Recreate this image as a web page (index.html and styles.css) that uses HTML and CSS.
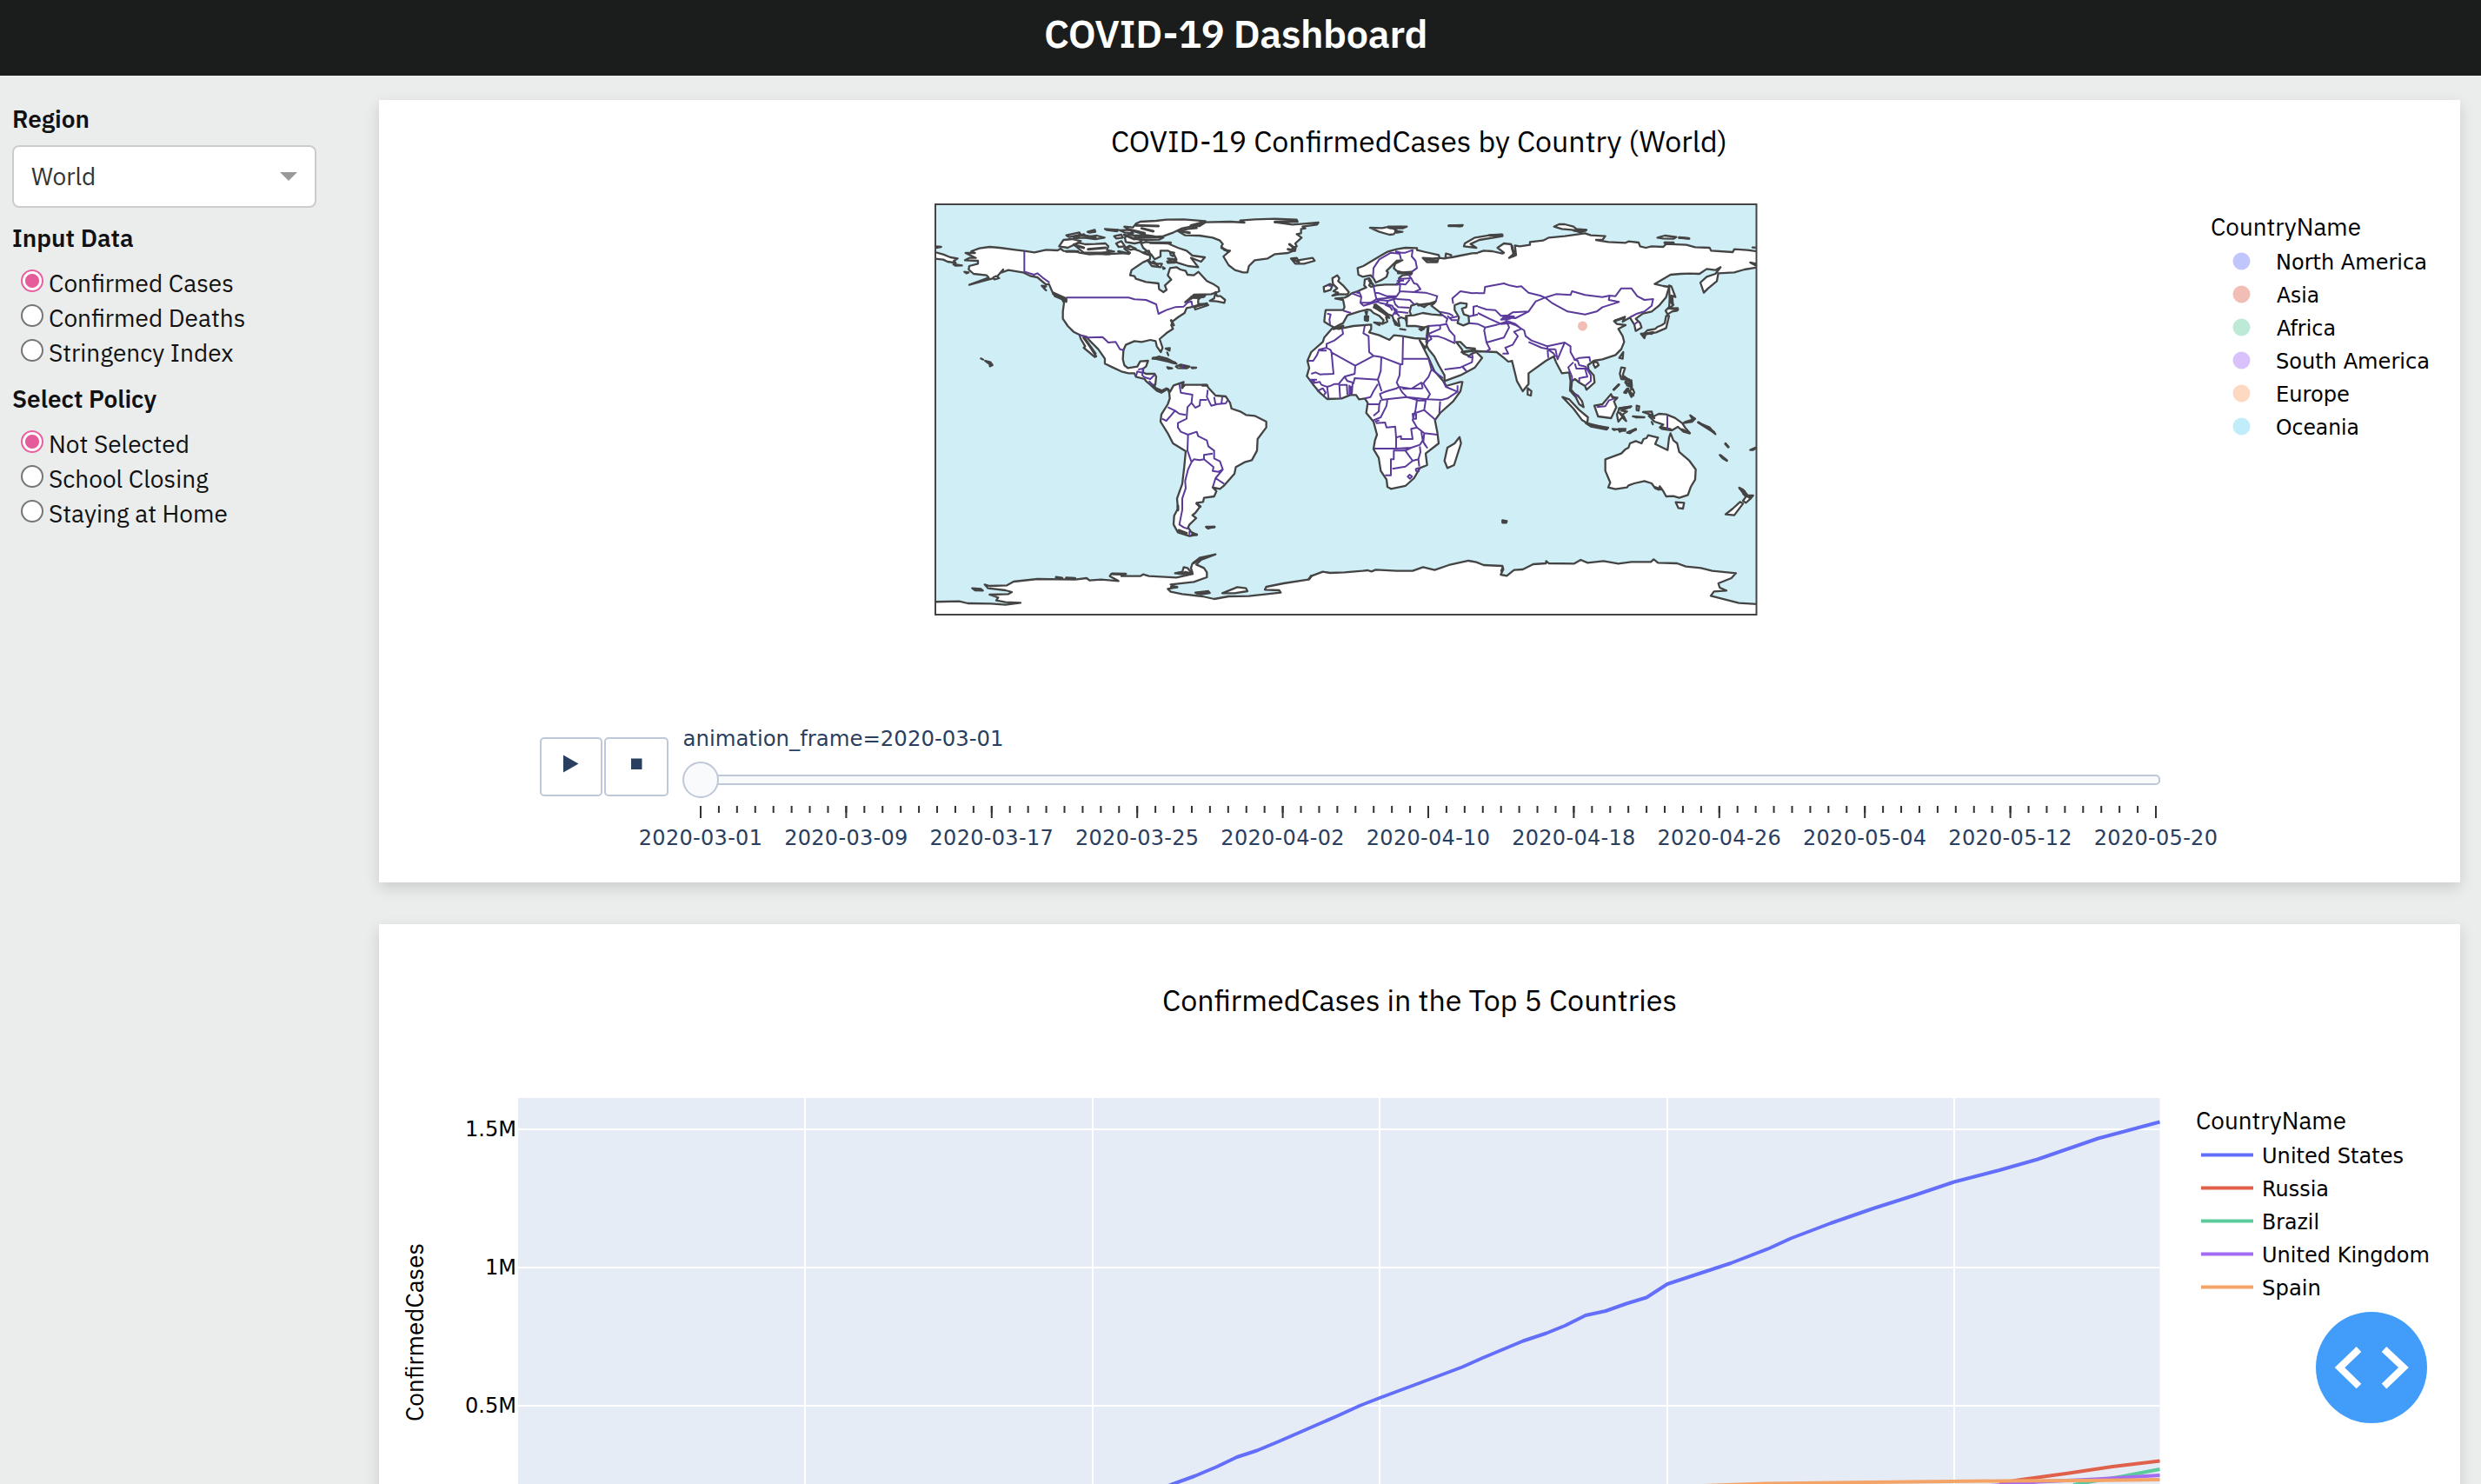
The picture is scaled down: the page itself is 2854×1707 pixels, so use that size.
FILE: index.html
```html
<!DOCTYPE html>
<html lang="en">
<head>
<meta charset="utf-8">
<title>COVID-19 Dashboard</title>
<link rel="stylesheet" href="styles.css">
</head>
<body>
<header class="banner"><h1 class="banner-title">COVID-19 Dashboard</h1></header>
<div class="layout">
  <aside class="sidebar">
    <h2 class="group-title">Region</h2>
    <div class="select"><span class="select-value">World</span><span class="select-arrow"></span></div>
    <h2 class="group-title title-input">Input Data</h2>
    <div class="radios">
      <label class="radio"><input type="radio" name="data" checked><span>Confirmed Cases</span></label>
      <label class="radio"><input type="radio" name="data"><span>Confirmed Deaths</span></label>
      <label class="radio"><input type="radio" name="data"><span>Stringency Index</span></label>
    </div>
    <h2 class="group-title title-policy">Select Policy</h2>
    <div class="radios">
      <label class="radio"><input type="radio" name="policy" checked><span>Not Selected</span></label>
      <label class="radio"><input type="radio" name="policy"><span>School Closing</span></label>
      <label class="radio"><input type="radio" name="policy"><span>Staying at Home</span></label>
    </div>
  </aside>
  <main class="charts">
    <section class="card card-map">
      <svg class="chart" viewBox="436 115 2394 900">
        <text class="title" x="1278" y="175" textLength="709" lengthAdjust="spacingAndGlyphs">COVID-19 ConfirmedCases by Country (World)</text>
        <defs><clipPath id="frame"><rect x="1076" y="235" width="944.5" height="472"/></clipPath></defs>
        <rect class="ocean" x="1076" y="235" width="944.5" height="472"/>
        <g clip-path="url(#frame)">
          <!-- North America -->
          <g transform="translate(1060 220) scale(.33333)">
            <path class="land" d="M152 213L185 213 172 207 200 197 235 192 270 195 330 203 355 206 390 211 430 202 470 204 480 198 490 206 530 207 545 212 580 218 620 214 635 217 680 215 720 213 700 198 718 188 735 200 750 205 770 215 790 222 788 235 765 245 750 255 725 272 720 290 735 293 740 302 775 313 818 318 820 338 835 348 846 340 840 325 862 305 850 290 858 265 880 262 893 270 912 275 918 288 940 290 956 278 985 310 1010 322 1025 332 1028 345 1000 355 940 357 910 383 935 368 962 367 955 375 955 388 978 390 990 393 945 408 942 400 960 392 940 398 915 403 908 420 885 435 868 448 862 462 868 475 845 490 822 510 832 540 826 555 812 535 808 517 790 513 760 520 735 517 705 530 697 548 695 580 700 600 712 610 745 605 755 587 782 585 775 605 765 612 765 625 775 630 805 630 810 640 807 668 800 668 810 680 830 688 845 680 858 692 850 682 828 695 812 688 790 668 775 655 770 648 740 640 735 628 715 628 690 622 660 608 633 595 633 578 610 545 580 515 570 502 560 500 575 525 590 550 603 570 598 572 560 540 565 535 550 510 545 495 525 485 505 465 488 440 488 415 492 385 485 372 455 355 440 320 430 322 400 297 375 292 350 280 300 272 272 282 282 270 258 298 230 305 165 323 200 310 232 298 225 290 180 285 163 270 165 258 195 250 195 240 150 238 165 230 188 230Z"/>
            <path class="land" d="M455 350L478 360 500 370 500 382 480 370 460 362ZM415 326L430 328 422 334 430 342ZM248 297L258 293 268 300 252 304ZM148 278L163 280 155 283ZM525 183L545 178 565 183 600 182 635 180 645 190 640 203 665 208 620 212 560 212 545 200ZM475 190L490 168 520 165 550 172 530 183 505 195ZM700 122L730 125 740 112 755 105 810 102 845 98 905 97 980 103 970 112 930 122 900 128 870 142 835 155 790 158 750 143 720 135ZM758 180L775 175 800 178 850 180 885 195 915 205 935 222 978 228 965 243 930 230 955 262 920 258 895 250 862 240 850 232 880 235 870 215 850 205 825 205 825 225 805 235 795 220 765 195ZM672 180L690 172 702 190 680 192ZM665 155L690 150 695 160 672 163ZM525 162L560 148 570 158 605 153 632 160 600 165 560 160ZM500 152L545 142 550 150 510 158ZM573 140L598 133 600 140 580 143ZM633 130L680 133 675 138 640 134ZM685 135L720 133 730 145 700 142ZM702 160L715 148 740 155 760 175 735 180 705 175ZM735 153L780 152 835 160 820 167 770 168 740 165ZM705 195L722 190 740 198 722 202ZM765 212L785 205 790 220ZM780 238L800 250 830 250 825 262 795 258ZM833 262L840 266 835 268ZM848 242L880 240 875 246 850 247ZM858 210L872 212 868 224 860 220ZM995 378L1010 370 1015 348 1020 362 1032 362 1048 375 1045 385 1020 380ZM930 365L980 358 975 365 950 368ZM797 578L820 570 850 578 880 595 865 592 830 578ZM878 605L895 598 925 605 915 611 885 610ZM848 607L865 611 852 612ZM932 608L948 609 935 611ZM843 543L857 541 856 550ZM848 556L852 566ZM205 577L213 581ZM220 585L238 590 245 600 236 604 236 597ZM110 252L140 256 118 257ZM48 190L68 192 50 195ZM40 208L75 218 100 228 125 232 112 240 118 247 90 243 75 236 40 232Z"/>
            <path class="heavy" d="M740 118L818 120M760 128L800 138M715 132L770 145M700 150L735 165M750 160L830 158M790 178L860 178M930 118L970 108M500 208L540 208M575 200L635 195M530 186L560 195M545 150L600 160M590 215L650 216M680 208L715 215M800 243L815 256M560 505L600 560M455 352L498 376M862 446L870 462M940 398L985 388M800 575L875 592M892 603L912 605"/>
            <path class="border" d="M355 206V277L388 288 400 283 418 298 442 315M500 367H715L735 373 775 375 810 390 818 423 845 410 875 400 905 398 920 383 932 380 935 397M545 495L575 505 625 503 645 522 670 520 685 545 700 549M740 640L745 622 762 626M748 615L765 612 762 635 770 642 790 648 805 633M800 670L785 655M902 598L901 611"/>
          </g>
          <!-- Greenland and Iceland -->
          <g transform="translate(1300 220) scale(.33333)">
            <path class="land" d="M165 137L200 130 230 127 210 120 240 120 260 107 345 105 395 108 380 101 430 97 500 95 575 98 578 105 500 107 560 115 600 112 650 108 645 115 595 122 605 128 590 130 590 145 575 148 592 160 570 180 575 190 560 196 570 203 545 213 500 217 475 232 430 238 410 258 405 280 390 280 362 272 340 255 322 225 345 205 325 203 315 190 320 182 310 170 285 160 240 153 190 152ZM555 232L575 230 580 238 630 230 637 240 600 250 570 250Z"/>
            <path class="heavy" d="M500 106L570 103M550 183L570 198M545 200L568 205M562 235L582 244M316 195L340 208M175 138L205 143M215 120L250 108"/>
          </g>
          <!-- Europe, western Asia, Africa -->
          <g transform="translate(1480 220) scale(.33333)">
            <path class="land" d="M672 212L665 213 640 214 600 222 570 228 548 230 550 215 568 220 565 228 545 232 525 230 520 245 485 245 470 230 505 232 528 230 525 220 480 210 450 203 450 196 410 195 380 200 350 208 320 225 290 243 265 258 245 265 248 288 262 295 290 290 300 300 308 315 330 305 345 295 350 280 345 275 370 250 380 240 400 238 375 250 370 265 380 275 400 280 432 278 430 287 400 290 388 300 390 312 380 322 340 322 310 325 292 330 285 325 292 310 285 300 270 305 268 325 275 332 245 345 225 352 212 362 200 367 168 370 195 375 200 400 195 410 135 410 132 430 130 450 145 460 165 470 180 462 195 455 210 428 250 415 278 408 290 410 300 420 320 430 335 445 330 458 348 450 343 435 355 437 345 427 320 412 305 400 303 392 320 400 350 425 365 430 375 460 390 465 385 440 395 435 410 440 415 455 415 430 430 428 425 415 430 395 450 388 475 400 485 392 515 380 500 395 530 418 535 428 500 425 470 420 440 428 412 430 415 465 445 465 475 470 490 465 488 490 485 520 480 525 490 545 510 570 525 600 545 635 545 655 600 635 650 608 675 575 655 555 640 560 630 568 610 560 605 545 585 520 600 520 620 540 650 543 650 550 672 553"/>
            <path class="land" d="M160 470L180 475 230 465 292 460 292 475 285 487 320 497 355 513 370 497 400 500 440 507 485 510 486 522 479 541 459 514 475 545 490 575 510 620 545 660 550 672 600 658 607 658 600 690 575 725 530 765 512 790 520 830 525 870 480 905 485 945 460 955 440 990 410 1017 360 1027 348 1020 345 995 325 965 318 920 300 890 305 860 312 840 300 795 275 765 280 730 270 715 250 718 240 703 220 703 190 715 140 717 115 695 90 665 70 638 78 610 72 585 85 555 125 520 130 505Z"/>
            <path class="sea" d="M580 393L600 385 622 388 620 400 605 405 612 425 628 430 630 455 610 463 590 455 595 435 580 410Z"/>
            <path class="land" d="M597 848L602 870 578 945 555 955 545 930 555 885 580 870ZM158 360L178 350 162 345 175 335 160 320 158 300 175 290 182 300 178 310 195 325 215 348 210 356 185 355ZM128 330L150 320 158 325 152 340 130 347ZM302 453L325 455 320 462ZM270 432L282 432 280 447 270 445ZM272 415L278 415 276 426ZM392 475L410 478ZM458 475L475 474 465 480ZM288 126L330 127 355 122 380 135 370 148 355 150 320 140ZM350 122L415 122 400 128 360 128ZM375 137L400 140 380 143ZM560 118L608 117 600 121ZM745 150L700 152 650 160 615 180 612 190 655 195 635 182 665 168 745 155Z"/>
            <path class="heavy" d="M308 392L345 428M385 282L432 282M352 125L395 124M480 236L520 240M285 308L298 322M488 470L483 520M370 445L385 462M302 400L312 405M455 393L508 386M560 119L605 119M162 475L195 465M272 432L280 445M700 152L742 150M605 555L645 550"/>
            <path class="border" d="M192 475L195 492 165 515 138 527 138 540 112 547 105 565 92 585H75M115 550H138M138 540L152 548 155 555 162 630 115 632 100 625 85 630M152 555L237 602 235 630 200 640 180 665 165 665M237 602L300 568 285 555 283 500 265 490 270 463M300 568L327 572 392 597H400L402 503M403 578H490M392 597L390 635 380 660 388 675 430 682 465 660 470 680M327 572L325 620 315 650 235 645 230 665M315 650L328 690M315 665L300 690 290 710 270 715M320 700L345 690 380 680 388 675 400 695 415 710 345 718 330 720 322 700M78 650H105M85 656L98 655M90 662L115 658 120 668 140 675 155 670 165 665M185 715L182 668M140 675L145 715M105 690L125 680 135 695 128 705M182 668H208L210 703M217 668V703M222 672V703M228 660L225 703M200 640L210 655 228 660M280 735H320L325 720M320 735L318 760 300 775M300 790L325 780 345 740 348 718M305 795L320 790M415 710L450 720 445 755 435 790 450 815M470 660L495 700 485 718 415 710M470 680L400 682M490 578L500 615 490 640 470 665M500 615L540 645M540 655L550 675 590 692M590 670L590 692 555 715 535 720 485 718M530 725L527 765M450 722L480 722 475 755 515 790M445 765L475 755M435 768H447V785H437ZM450 815L475 835 520 840M308 800L340 798 345 815 375 812 378 850 395 845V855L435 855 430 820 450 815M378 850V888H303M378 888L430 885 460 875 470 860 465 830M475 835L472 865 485 885 475 872M430 885L410 895 370 895V925H360V980L340 980M410 895L435 930 455 925 462 900 460 880M435 930L410 950 365 958M455 925L458 950M418 985L425 978 433 984 426 992ZM446 958L455 955 456 966 447 965ZM298 300L300 265 320 235 360 212 390 215 395 235M375 207L395 212 410 212 435 203 432 225 445 240 450 265 432 278M385 303L430 300 420 287M378 318L410 322 425 305M430 300L440 318 450 320 462 338 440 348 390 345 392 322 378 322M300 327L305 350 320 352 345 362 380 362 392 345M380 310L405 308M440 348L480 350 520 362 515 380M380 372L425 375 440 390M250 345L258 365 255 385 290 385 310 372 305 350M225 352L258 365M238 348L250 352M255 385L265 395 300 385 320 375 350 378 345 390 320 385M280 385L320 382M310 372L350 368 380 365M350 378L380 370M345 390L365 395 375 415 365 430M340 392L358 400 365 412M375 415L420 420M370 375L375 390 385 400 425 402M365 400L380 410 376 425M375 415L390 432M195 412L222 420M140 422L152 425 148 442 150 460M145 326L155 326M530 416L560 422 575 430M535 425L555 440 550 455M555 430L570 445 590 445M560 438L590 432M490 465L530 462 552 458 562 480 580 500 580 520M490 492L530 475 530 462M490 500H520L545 508 582 525M485 520L500 510 492 495M484 495V515M545 615L600 608 640 590 642 570M605 605L620 620 610 608M640 560L642 575 625 570M630 455L680 460 690 480 685 520 700 530 695 550M630 432L660 425M575 388L572 370 600 345 640 352 680 350 690 325 750 318"/>
          </g>
          <!-- Eastern Asia, Oceania -->
          <g transform="translate(1700 220) scale(.33333)">
            <path class="land" d="M0 212L20 205 50 207 85 215 90 212 68 195 90 180 115 183 120 205 130 210 108 230 132 220 128 187 145 190 180 185 180 175 225 170 245 160 300 155 370 145 390 152 440 155 430 168 408 168 450 175 510 178 520 173 555 177 560 190 580 195 600 190 640 192 650 182 720 185 750 193 800 195 805 205 880 210 885 200 930 203 970 208 970 262 920 270 885 280 830 283 825 310 795 335 780 350 768 315 790 295 820 285 838 262 820 272 790 268 765 285 730 284 700 285 665 288 610 320 640 327 660 330 650 365 625 395 600 415 570 422 545 440 560 455 565 470 545 482 540 460 525 436 500 450 508 433 470 448 480 458 510 462 485 475 500 500 505 520 495 545 475 565 430 580 400 585 380 600 382 615 400 635 403 660 375 685 370 672 350 660 335 648 325 655 322 685 335 700 345 705 360 725 365 745 350 735 338 710 318 688 320 655 315 625 290 628 270 590 262 570 235 585 175 628 175 665 155 690 135 655 118 585 105 588 90 575 65 555 0 552"/>
            <path class="land" d="M400 600L398 590 412 590 417 600 405 609ZM488 575L502 555 500 578ZM172 680L185 690 183 705 172 702ZM660 325L668 328 682 365 668 360 668 385 675 392 660 405 662 370ZM648 412L662 398 668 405 690 403 688 412 670 415 655 425ZM650 430L660 430 650 472 615 487 570 495 585 480 612 475 620 468 635 462 645 455ZM563 492L580 490 575 507ZM588 490L605 486 600 492ZM292 710L315 718 350 755 380 780 378 800 360 790 330 750ZM372 800L400 808 450 816 445 822 390 812ZM465 820L480 822 470 824ZM485 820L510 820 490 830ZM515 833L545 820 525 835ZM402 740L430 735 460 700 465 712 482 712 470 725 478 745 460 783 415 777ZM485 795L480 770 490 748 530 742 495 757 515 760 500 770 512 793 498 780ZM548 740L557 742 555 757 548 755ZM535 777L575 780 545 780ZM490 630L495 608 508 610 500 635 520 650 495 648ZM510 655L530 652 532 675 515 670ZM505 695L520 680 512 696ZM520 690L535 682 540 695 530 710ZM468 685L487 667ZM570 762L600 760 605 778 625 768 650 770 680 782 705 800 715 815 732 835 710 830 690 813 670 825 635 820 628 815 640 805 610 795 590 775 600 772ZM600 796L604 804ZM710 800L740 795 750 785 733 773 742 788 715 796ZM760 797L770 803 800 815 820 838 805 825ZM855 870L865 883ZM835 910L860 930 845 922ZM940 893L965 882 950 893ZM440 925L495 905 510 890 520 885 525 870 545 862 565 870 572 855 582 852 588 842 622 850 612 872 655 893 660 850 665 835 675 860 688 870 695 900 730 930 752 960 750 995 735 1020 725 1048 695 1058 675 1052 650 1053 640 1035 628 1018 625 1030 612 1025 600 1008 575 1000 540 1008 520 1015 515 1022 475 1028 450 1022 457 1005 440 965ZM683 1073L712 1075 708 1095 692 1093ZM902 1023L915 1030 932 1050 950 1050 940 1062 925 1075 915 1068 925 1055ZM905 1072L915 1078 885 1118 855 1115 880 1095ZM85 1135L100 1138 98 1144 85 1144ZM620 160L645 153 685 158 675 164 640 163ZM695 160L730 163ZM645 177L675 178ZM263 122L280 114 300 114 330 122 340 130 375 133 355 142 325 133 290 130ZM948 194L970 195ZM940 246L960 250 958 256Z"/>
            <path class="heavy" d="M118 190L125 222M575 492L605 488M332 135L372 135M465 710L478 715M500 640L522 652M510 660L530 668M522 650L530 680M508 692L516 682M524 692L536 704M488 750L525 745M490 765L505 782M600 775L608 782M635 815L665 822M705 822L728 834M612 1022L630 1028M918 1045L940 1058M905 1026L920 1036M695 160L728 163M645 178L675 178M762 798L815 832M670 362L672 390M838 912L858 928M855 872L864 882M488 824L508 826M470 684L486 668M520 832L545 822M660 403L690 408M475 446L505 437M378 802L445 818M87 1140H98"/>
            <path class="border" d="M0 352L22 352 25 330 90 318 110 325 135 330 150 328 175 350 215 360 232 367 200 380 175 415 130 438 85 435M0 398L30 408 60 410 80 430 105 428 120 418 175 415M-15 430L-15 398 0 395M0 420L40 440 80 458 110 455 130 462M80 443L110 440 125 432 95 430ZM0 458L25 470 60 462 100 450 108 470 90 505 30 522 22 480 25 470M30 522L42 545 28 553M95 445L130 458 150 475 125 485 138 500 120 530 95 540 105 560 85 560M130 462L160 480 165 500 185 515 240 535 300 522 320 535 320 555 335 582 350 575 385 572 388 588M175 520L220 540 245 545 268 545M240 535L243 575M245 548L262 560 268 572M268 545L275 580 290 545 300 522M330 580L345 585 350 600 372 605 390 635 390 655 372 670M330 590L312 608 325 640 325 655M335 595L340 612 370 612 378 640 350 645 350 658M232 367L270 355 320 358 325 345 370 358 430 365 455 360 452 375 487 382 430 400 410 415 370 425 310 415 255 385 232 367M455 360L475 362 495 335 530 335 550 362 575 375 605 372 600 395 575 415 550 422 525 435M542 458L552 450M335 698L348 710M410 745L440 742 452 722 470 716M654 775V822"/>
          </g>
          <!-- South America, Antarctica -->
          <g transform="translate(1060 440) scale(.33333)">
            <path class="land" d="M850 22L858 32 870 10 905 -2 900 18 910 8 935 8 985 8 990 18 1015 45 1050 48 1065 70 1070 90 1100 100 1120 112 1150 115 1190 135 1190 155 1160 195 1158 235 1140 268 1115 275 1085 292 1080 315 1045 355 1030 367 1005 362 1018 375 1010 393 975 398 972 412 950 415 960 430 945 450 935 458 948 468 925 490 920 500 930 515 950 525 925 530 885 517 870 490 872 460 885 435 882 400 900 350 907 290 912 237 868 210 850 175 825 135 828 110 850 75 857 55 855 35ZM982 498L1012 498 990 504Z"/>
            <path class="land" d="M40 757L130 755 160 762 240 763 290 767 342 760 290 758 258 752 265 742 235 732 300 730 312 723 290 717 230 710 218 697 235 702 295 700 318 687 400 678 530 680 570 675 580 683 620 680 680 685 650 668 655 660 700 663 690 668 755 668 765 662 785 668 880 673 930 662 935 655 930 640 935 625 960 605 1015 593 965 612 948 628 975 640 985 655 985 672 940 688 860 697 880 707 850 712 860 722 900 730 970 738 1010 747 1060 738 1130 737 1240 725 1235 717 1185 715 1190 705 1250 693 1335 680 1345 668 1385 653 1410 657 1460 655 1523 650 1540 648 1553 652 1568 646 1640 650 1695 650 1731 637 1771 647 1820 630 1888 615 1915 620 1940 630 2005 633 2008 645 1999 663 2020 667 2045 647 2075 645 2111 627 2155 624 2156 616 2165 624 2253 625 2275 612 2299 622 2354 616 2405 625 2450 619 2517 619 2527 610 2542 622 2608 624 2638 635 2690 640 2729 650 2811 658 2795 675 2750 693 2755 708 2778 718 2735 721 2724 736 2821 761 2890 765 2890 810 40 810Z"/>
            <path class="land" d="M175 710L205 712 212 718 185 717ZM900 655L905 637 918 640 930 655 920 662ZM875 658L900 653 905 662ZM1038 727L1090 706 1120 710 1125 720 1080 727ZM945 725L990 720 995 726 965 731Z"/>
            <path class="heavy" d="M465 672L485 675M500 674L530 676M660 660L705 661M910 655L935 660M862 705L882 706M950 727L985 726M888 510L915 520M885 425V440M950 418L962 428M900 5V18M970 10H985M935 523L950 525M985 500L1010 499M940 622L970 605M1338 678L1345 668M2002 650L2006 640"/>
            <path class="border" d="M890 5L895 35 935 42 932 70 945 87 960 80 962 60 985 60M988 25L985 50 1000 80 1020 75M1010 50L1015 75 1050 72 1058 60M1038 50L1035 75M932 70L918 85 915 125 885 140 885 155 895 170 920 180 950 170 955 185 985 200 990 220 1010 235V262L1030 272 1040 300 1025 308 1005 305 1008 292 975 265 975 250 1005 245M920 180L918 235 932 275 940 265 960 268 975 265M932 275L920 300 910 340 912 365 900 400 900 440 890 490 905 500 920 505M1045 350L1015 330 1005 362M1040 300L1015 330M850 85L875 97 860 115 845 132 830 125M875 97L890 108 912 112M925 512V528"/>
          </g>
          <circle class="c-asia" cx="1820.5" cy="375" r="5.5"/>
        </g>
        <rect class="frame" x="1076" y="235" width="944.5" height="472"/>

        <text class="legend-title" x="2543" y="271" textLength="173" lengthAdjust="spacingAndGlyphs">CountryName</text>
        <circle class="c-na" cx="2578.5" cy="300.500" r="10"/><text class="label" x="2618" y="310" textLength="174" lengthAdjust="spacingAndGlyphs">North America</text>
        <circle class="c-asia" cx="2578.5" cy="338.500" r="10"/><text class="label" x="2619" y="348" textLength="49" lengthAdjust="spacingAndGlyphs">Asia</text>
        <circle class="c-africa" cx="2578.5" cy="376.500" r="10"/><text class="label" x="2619" y="386" textLength="68" lengthAdjust="spacingAndGlyphs">Africa</text>
        <circle class="c-sa" cx="2578.5" cy="414.500" r="10"/><text class="label" x="2618" y="424" textLength="177" lengthAdjust="spacingAndGlyphs">South America</text>
        <circle class="c-europe" cx="2578.5" cy="452.500" r="10"/><text class="label" x="2618" y="462" textLength="85" lengthAdjust="spacingAndGlyphs">Europe</text>
        <circle class="c-oceania" cx="2578.5" cy="490.500" r="10"/><text class="label" x="2618" y="500" textLength="96" lengthAdjust="spacingAndGlyphs">Oceania</text>

        <rect class="button" x="622" y="849" width="70" height="66" rx="4"/>
        <rect class="button" x="696" y="849" width="72" height="66" rx="4"/>
        <path class="glyph" d="M648 868.5L665.5 878.5 648 888.5ZM726 872.5H738.5V885H726Z"/>
        <text class="label slider" x="785.5" y="858" textLength="369" lengthAdjust="spacingAndGlyphs">animation_frame=2020-03-01</text>
        <rect class="rail" x="796" y="892" width="1688" height="10" rx="4"/>
        <circle class="rail" cx="806" cy="897" r="20"/>
        <path class="minor" d="M805 931H2482"/>
        <path class="major" d="M805 934H2482"/>
        <g class="label slider ticks">
          <text x="806" y="972">2020-03-01</text><text x="973.4" y="972">2020-03-09</text><text x="1140.8" y="972">2020-03-17</text><text x="1308.2" y="972">2020-03-25</text><text x="1475.6" y="972">2020-04-02</text><text x="1643" y="972">2020-04-10</text><text x="1810.4" y="972">2020-04-18</text><text x="1977.8" y="972">2020-04-26</text><text x="2145.2" y="972">2020-05-04</text><text x="2312.6" y="972">2020-05-12</text><text x="2480" y="972">2020-05-20</text>
        </g>
      </svg>
    </section>
    <section class="card card-lines">
      <svg class="chart" viewBox="436 1063 2394 700">
        <text class="title" x="1337" y="1163" textLength="592" lengthAdjust="spacingAndGlyphs">ConfirmedCases in the Top 5 Countries</text>
        <rect class="plot" x="596" y="1263" width="1888.5" height="500"/>
        <path class="grid" d="M596 1299H2484.5M596 1458H2484.5M596 1617H2484.5M926 1263V1763M1257 1263V1763M1587 1263V1763M1918 1263V1763M2248 1263V1763"/>
        <g class="series">
          <path class="s-us" d="M1325 1716L1348 1707.5 1374 1698 1399 1687.5 1423 1676 1446 1668.5 1470 1658.5 1493 1648.500 1517 1638 1540 1628 1564 1617 1587 1608 1634 1590.500 1682 1572.500 1705.500 1562 1752 1542.500 1779 1533.500 1800 1525 1824 1513 1847 1508 1871 1499.500 1894 1492.500 1918 1477 1991 1453 2035 1436 2060 1424.500 2106 1407 2155 1390 2202 1375 2248 1359.500 2300 1346 2344 1333.500 2413.500 1309.500 2484.500 1290.500"/>
          <path class="s-ru" d="M2300 1706.500L2318 1703 2380 1694.500 2430 1687 2484.500 1680.500"/>
          <path class="s-br" d="M2385 1708L2410 1703.500 2440 1698.500 2484.500 1690"/>
          <path class="s-uk" d="M2290 1709L2345 1704.500 2410 1701.500 2484.500 1697"/>
          <path class="s-es" d="M1930 1710L2030 1706.500 2150 1705 2300 1703.500 2400 1703 2484.500 1702"/>
        </g>
        <g class="label">
          <text x="535" y="1307" textLength="59" lengthAdjust="spacingAndGlyphs">1.5M</text>
          <text x="558" y="1466" textLength="36" lengthAdjust="spacingAndGlyphs">1M</text>
          <text x="535" y="1625" textLength="59" lengthAdjust="spacingAndGlyphs">0.5M</text>
        </g>
        <text class="legend-title" transform="translate(487 1635) rotate(-90)" textLength="205" lengthAdjust="spacingAndGlyphs">ConfirmedCases</text>
        <text class="legend-title" x="2526" y="1299" textLength="173" lengthAdjust="spacingAndGlyphs">CountryName</text>
        <g class="series"><path class="s-us" d="M2532 1328.500H2592"/><path class="s-ru" d="M2532 1366.500H2592"/><path class="s-br" d="M2532 1404.500H2592"/><path class="s-uk" d="M2532 1442.500H2592"/><path class="s-es" d="M2532 1480.500H2592"/></g>
        <g class="label">
          <text x="2602" y="1338" textLength="163" lengthAdjust="spacingAndGlyphs">United States</text>
          <text x="2602" y="1376" textLength="77" lengthAdjust="spacingAndGlyphs">Russia</text>
          <text x="2602" y="1414" textLength="66" lengthAdjust="spacingAndGlyphs">Brazil</text>
          <text x="2602" y="1452" textLength="193" lengthAdjust="spacingAndGlyphs">United Kingdom</text>
          <text x="2602" y="1490" textLength="68" lengthAdjust="spacingAndGlyphs">Spain</text>
        </g>
      </svg>
    </section>
  </main>
</div>
<button class="debug" aria-label="Debug menu"><svg viewBox="0 0 128 128"><path d="M49.500 43L27.500 64 49.500 85.500M78.500 43L101 64 78.500 85.500"/></svg></button>
</body>
</html>
```
FILE: styles.css
```css
* { box-sizing: border-box; }
html, body { height: 1707px; overflow: hidden; }
body { margin: 0; background: #ebedec; color: #111; font-family: "IBM Plex Sans", Roboto, sans-serif; }
.banner { height: 87px; background: #1b1d1c; display: flex; justify-content: center; }
.banner-title { margin: 0; padding-right: 11px; color: #fff; font-size: 45px; font-weight: 600; line-height: 76px; letter-spacing: -0.4px; white-space: nowrap; }
.layout { display: flex; }
.sidebar { width: 436px; padding: 29px 0 0 14px; }
.group-title { margin: 0; font-size: 28px; font-weight: 600; line-height: 42px; }
.select { display: flex; align-items: center; justify-content: space-between; width: 350px; height: 72px; margin-top: 9px; padding: 0 20px 0 20px; background: #fff; border: 2px solid #ccc; border-radius: 8px; }
.select-value { padding-bottom: 1px; color: #333; font-size: 28px; }
.select-arrow { border: 10px solid transparent; border-top-color: #999; border-bottom: 0; }
.title-input { margin-top: 14px; }
.title-policy { margin-top: 11px; }
.radios { display: flex; flex-direction: column; margin-top: 12px; padding-left: 10px; }
.radio { display: flex; align-items: center; height: 40px; gap: 6px; font-size: 28px; white-space: nowrap; }
.radio span { padding-bottom: 4px; }
.radio input { appearance: none; width: 26px; height: 26px; margin: 0 0 8px; border: 2px solid #767676; border-radius: 50%; background: #fff; }
.radio input:checked { border-color: #e8609f; background: radial-gradient(circle, #e55c9a 0 7.5px, #fff 8.5px); }
.charts { display: flex; flex-direction: column; gap: 48px; padding-top: 28px; }
.card { width: 2394px; background: #fff; box-shadow: 0 6px 16px rgba(0, 0, 0, .14); }
.card-map { height: 900px; }
.card-lines { height: 700px; }
.chart { display: block; width: 100%; height: 100%; }
.title { font-size: 34px; fill: #000; }
.legend-title { font-size: 28.5px; fill: #000; }
.label { font-family: Verdana, "DejaVu Sans", sans-serif; font-size: 24px; fill: #000; }
.slider { fill: #2a3f5f; }
.ticks { text-anchor: middle; letter-spacing: .3px; }
.ocean { fill: #d0eef6; }
.frame { fill: none; stroke: #444; stroke-width: 2; }
.land, .sea, .border, .heavy { vector-effect: non-scaling-stroke; stroke-linejoin: round; stroke-width: 2.3; }
.land { fill: #fff; stroke: #444; }
.sea { fill: #d0eef6; stroke: #444; }
.heavy { fill: none; stroke: #444; stroke-width: 3; stroke-linecap: round; }
.border { fill: none; stroke: #5a3a9a; stroke-width: 2; }
.c-na { fill: #c0c6fb; }
.c-asia { fill: #f2bdb4; }
.c-africa { fill: #bde9d7; }
.c-sa { fill: #d9c2fc; }
.c-europe { fill: #fcd9c0; }
.c-oceania { fill: #c1edfa; }
.button { fill: #fff; stroke: #bec8d9; stroke-width: 2; }
.glyph { fill: #2a3f5f; }
.rail { fill: #f8fafc; stroke: #bec8d9; stroke-width: 2; }
.minor, .major { fill: none; stroke: #333; }
.minor { stroke-width: 8; stroke-dasharray: 2 18.925; }
.major { stroke-width: 14; stroke-dasharray: 2 165.4; }
.plot { fill: #e5ecf6; }
.grid { stroke: #fff; stroke-width: 2; }
.series { fill: none; stroke-width: 4; stroke-linejoin: round; }
.s-us { stroke: #636efa; }
.s-ru { stroke: #e0604a; }
.s-br { stroke: #5ccb9b; }
.s-uk { stroke: #a36cf3; }
.s-es { stroke: #f5a468; }
.debug { position: absolute; left: 2664px; top: 1509px; width: 128px; height: 128px; padding: 0; border: 0; border-radius: 50%; background: #419df9; }
.debug svg { display: block; width: 128px; height: 128px; fill: none; stroke: #fff; stroke-width: 8; }
```
